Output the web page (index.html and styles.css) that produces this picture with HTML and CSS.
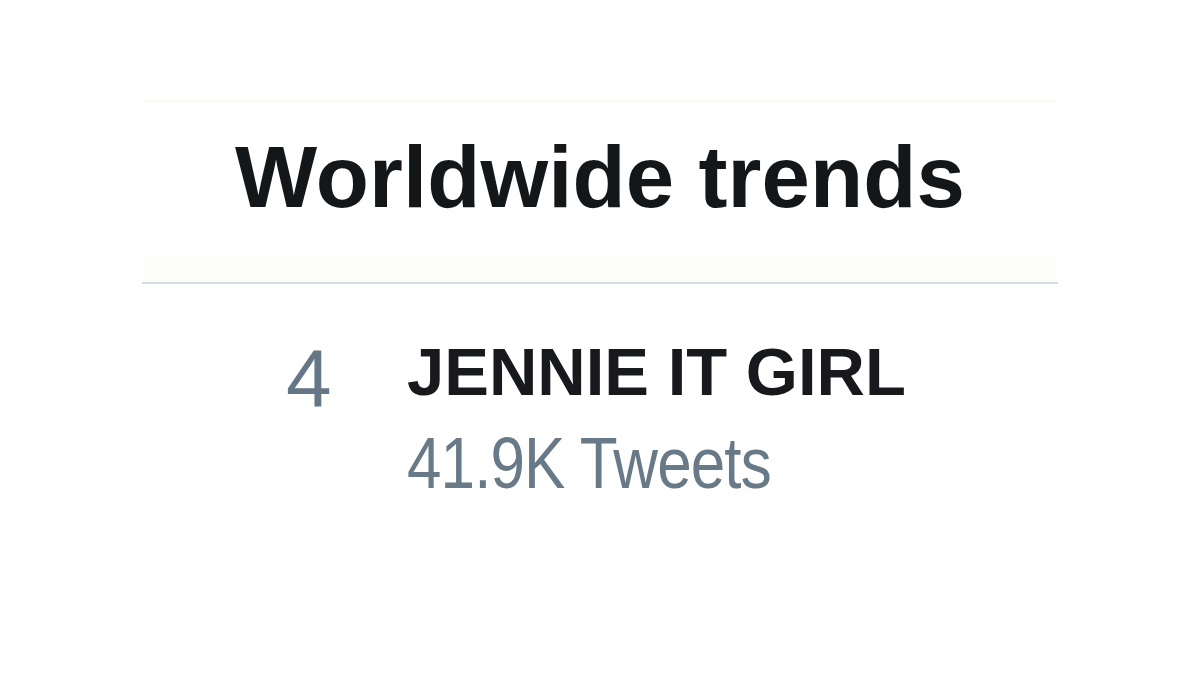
FILE: index.html
```html
<!DOCTYPE html>
<html lang="en">
<head>
<meta charset="utf-8">
<title>Worldwide trends</title>
<link rel="stylesheet" href="styles.css">
</head>
<body>
<main class="panel">
  <header class="panel-head">
    <h1 class="title">Worldwide trends</h1>
  </header>
  <section class="trend">
    <div class="rank">4</div>
    <div class="info">
      <div class="name">JENNIE IT GIRL</div>
      <div class="count"><span class="count-text">41.9K Tweets</span></div>
    </div>
  </section>
</main>
</body>
</html>
```

FILE: styles.css
```css
html, body {
  margin: 0;
  padding: 0;
  background: #ffffff;
}

body {
  font-family: "Liberation Sans", Arial, sans-serif;
  padding-top: 100px;
}

.panel {
  width: 916px;
  margin-left: 142px;
  border-top: 2px solid #fbfbf5;
}

.panel-head {
  height: 182px;
  box-sizing: border-box;
  padding-top: 31px;
  border-bottom: 2px solid #d6dee4;
  background: linear-gradient(#ffffff 0, #ffffff 150px, #fdfdf9 156px, #fdfdf9 100%);
}

.title {
  margin: 0;
  font-size: 87px;
  line-height: 87px;
  font-weight: 700;
  color: #14171a;
  text-align: center;
  letter-spacing: 0.1px;
}

.trend {
  display: flex;
  align-items: flex-start;
  padding: 54px 0 0 144px;
}

.rank {
  width: 121px;
  flex: none;
  font-size: 82px;
  line-height: 82px;
  color: #657786;
}

.info {
  display: flex;
  flex-direction: column;
  gap: 22px;
}

.name {
  font-size: 67px;
  line-height: 67px;
  font-weight: 700;
  color: #17191c;
}

.count {
  font-size: 72px;
  line-height: 72px;
  color: #687987;
  white-space: nowrap;
}

.count-text {
  display: inline-block;
  letter-spacing: -1px;
  transform: scaleX(0.86);
  transform-origin: left center;
}
```
